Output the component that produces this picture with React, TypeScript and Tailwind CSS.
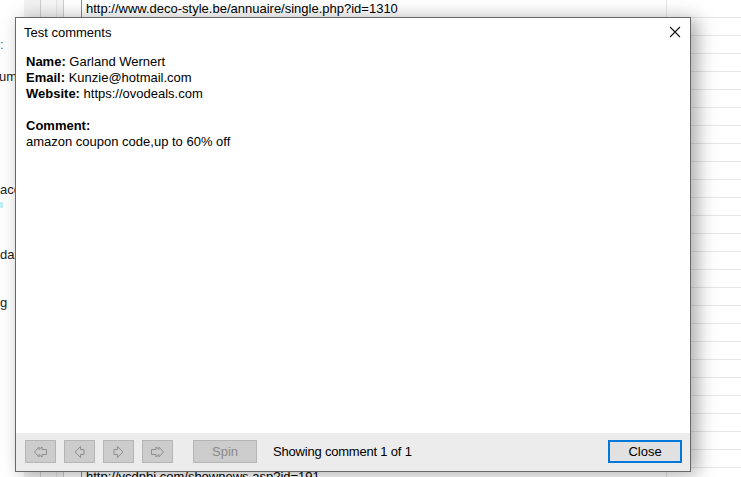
import React from "react";

const rows = Array.from({ length: 27 });

function ArrowIcon({ dir, double }: { dir: "left" | "right"; double?: boolean }) {
  const single = "M3 8 L8.5 2.5 L8.5 5.5 L12 5.5 L12 10.5 L8.5 10.5 L8.5 13.5 Z";
  const dbl = "M1.5 8 L6 3 L6 5.5 L9 3 L9 5.5 L13.5 5.5 L13.5 10.5 L9 10.5 L9 13 L6 10.5 L6 13 Z";
  return (
    <svg
      width="15"
      height="16"
      viewBox="0 0 15 16"
      className={dir === "right" ? "-scale-x-100" : ""}
    >
      <path
        d={double ? dbl : single}
        fill="none"
        stroke="#8e8e8e"
        strokeWidth="1"
      />
    </svg>
  );
}

function NavButton({ children }: { children: React.ReactNode }) {
  return (
    <div className="w-[31px] h-[23px] bg-[#cccccc] border border-[#b5b5b5] flex items-center justify-center">
      {children}
    </div>
  );
}

function CommentDialog() {
  return (
    <div className="absolute left-[15px] top-[17px] w-[676px] h-[455px] bg-white border border-[#686868] shadow-[6px_2px_18px_rgba(0,0,0,0.34)] flex flex-col">
      <div className="flex items-start justify-between pl-[8px] pr-[9px] pt-[7px]">
        <div className="text-[13px] leading-[16px] text-black">Test comments</div>
        <svg width="12" height="12" viewBox="0 0 12 12" className="mt-[1px]">
          <path d="M1 1 L11 11 M11 1 L1 11" stroke="#111" strokeWidth="1.1" />
        </svg>
      </div>
      <div className="flex-1 pl-[10px] pt-[13px] text-[13px] leading-[16px] text-black">
        <div>
          <b>Name:</b> Garland Wernert
        </div>
        <div>
          <b>Email:</b> Kunzie@hotmail.com
        </div>
        <div>
          <b>Website:</b> https://ovodeals.com
        </div>
        <div className="h-[16px]" />
        <div>
          <b>Comment:</b>
        </div>
        <div>amazon coupon code,up to 60% off</div>
      </div>
      <div className="h-[38px] bg-[#ececec] flex items-center pl-[9px] pr-[8px] pb-[1px]">
        <div className="flex gap-[8px]">
          <NavButton>
            <ArrowIcon dir="left" double />
          </NavButton>
          <NavButton>
            <ArrowIcon dir="left" />
          </NavButton>
          <NavButton>
            <ArrowIcon dir="right" />
          </NavButton>
          <NavButton>
            <ArrowIcon dir="right" double />
          </NavButton>
        </div>
        <div className="ml-[20px] w-[64px] h-[23px] bg-[#cccccc] border border-[#b5b5b5] flex items-center justify-center text-[13px] text-[#8a8a8a]">
          Spin
        </div>
        <div className="ml-[16px] text-[13px] tracking-[-0.2px] text-black">Showing comment 1 of 1</div>
        <div className="ml-auto w-[74px] h-[23px] bg-[#e1e1e1] border-2 border-[#0078d7] flex items-center justify-center text-[13px] text-black">
          Close
        </div>
      </div>
    </div>
  );
}

export default function App() {
  return (
    <div className="relative w-[741px] h-[477px] overflow-hidden bg-white font-['Liberation_Sans',Arial,sans-serif]">
      <div className="flex">
        <div className="w-[24px] shrink-0 text-[13px] leading-[16px] text-[#222] overflow-hidden">
          <div className="h-[37px]" />
          <div className="h-[16px] text-[#1a5fb4]">:</div>
          <div className="h-[16px]" />
          <div className="h-[16px] -ml-[1px]">um</div>
          <div className="h-[97px]" />
          <div className="h-[16px]">ace</div>
          <div className="h-[4px]" />
          <div className="h-[6px] w-[3px] bg-[#bfeff5]" />
          <div className="h-[39px]" />
          <div className="h-[16px]">dar</div>
          <div className="h-[32px]" />
          <div className="h-[16px]">g</div>
        </div>
        <div className="flex-1">
          {rows.map((_, i) => (
            <div key={i} className="h-[18px] flex border-b border-[#e6e6e6]">
              <div className="w-[17px] shrink-0 bg-[#f2f2f2] border-r border-[#cfcfcf]" />
              <div className="w-[16px] shrink-0 bg-[#f6f6f6] border-r border-[#e2e2e2]" />
              <div className="w-[7px] shrink-0 bg-[#f4f4f4] border-r border-[#cdcdcd]" />
              <div className="w-[18px] shrink-0 border-r border-[#8f8f8f]" />
              <div className="w-[585px] shrink-0 pl-[4px] text-[13px] leading-[17px] text-black border-r border-[#e6e6e6] whitespace-nowrap overflow-hidden">
                {i === 0 && "http://www.deco-style.be/annuaire/single.php?id=1310"}
                {i === 26 && "http://ycdnbj.com/shownews.asp?id=191"}
              </div>
              <div className="flex-1" />
            </div>
          ))}
        </div>
      </div>
      <CommentDialog />
    </div>
  );
}
